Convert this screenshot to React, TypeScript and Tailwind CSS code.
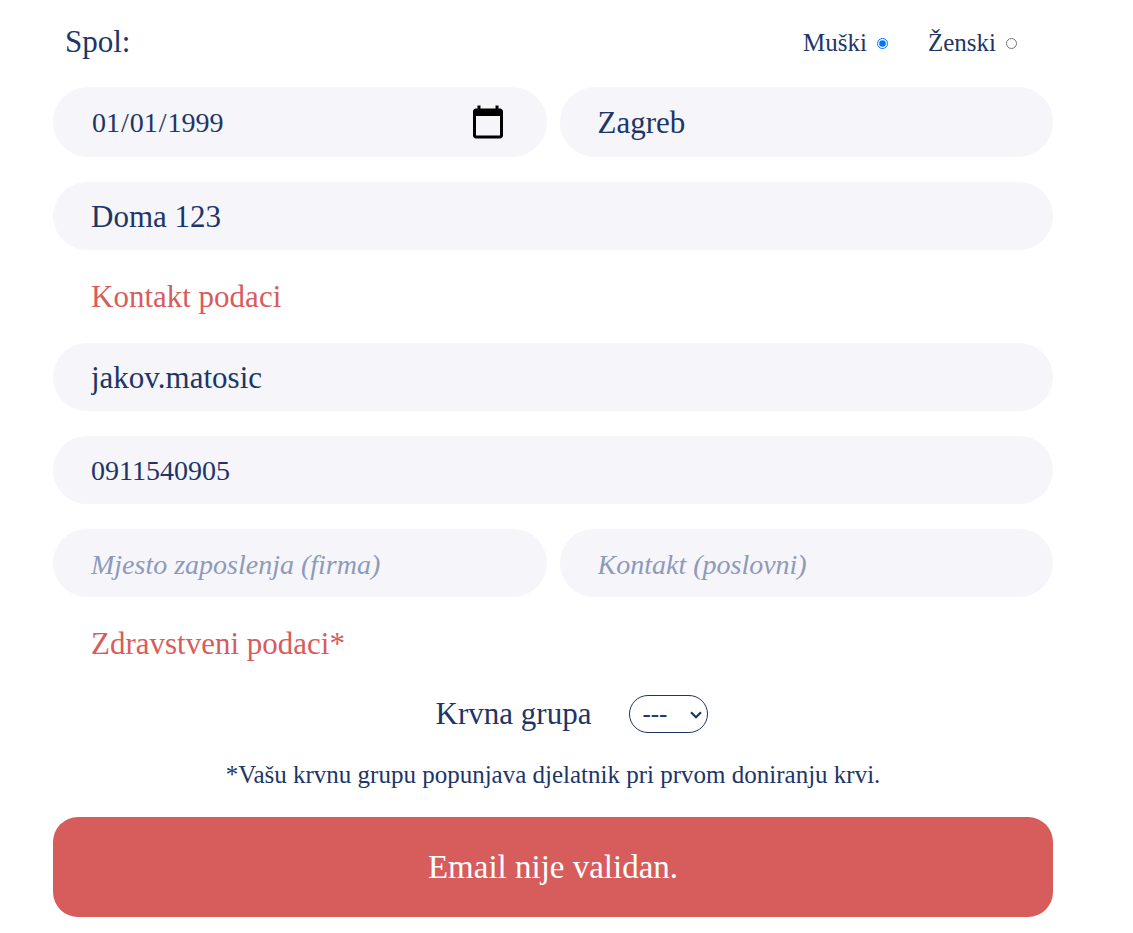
import type { InputHTMLAttributes } from "react";

type FieldProps = InputHTMLAttributes<HTMLInputElement> & { label: string };

function Field({ label, className = "h-[68px] text-[31px]", ...props }: FieldProps) {
  return (
    <input
      aria-label={label}
      className={`w-full min-w-0 flex-1 rounded-full bg-[#f5f5fa] px-[38px] pt-[2px] text-[#1d3567] outline-none placeholder:text-[28px] placeholder:text-[#8e9aba] placeholder:italic [&::-webkit-calendar-picker-indicator]:size-[38px] ${className}`}
      {...props}
    />
  );
}

function SectionTitle({ children }: { children: string }) {
  return (
    <h2 className="flex h-[43px] items-center px-[38px] pt-[2px] text-[31px] text-[#d75c5c]">
      {children}
    </h2>
  );
}

export default function App() {
  return (
    <main className="min-h-screen bg-white pr-20 pl-[53px] font-['Liberation_Serif',serif] text-[#1d3567]">
      <form className="flex flex-col gap-[25px] pb-4" onSubmit={(e) => e.preventDefault()}>
        <fieldset className="flex items-center justify-between pt-[22px] pr-9 pl-3">
          <span className="text-[31px] leading-10">Spol:</span>
          <div className="flex gap-10 pt-[2px] text-[25px]">
            <label className="flex items-center gap-[10px]">
              Muški
              <input type="radio" name="spol" defaultChecked className="size-[11px]" />
            </label>
            <label className="flex items-center gap-[10px]">
              Ženski
              <input type="radio" name="spol" className="size-[11px]" />
            </label>
          </div>
        </fieldset>

        <div className="flex gap-[13px]">
          <Field
            label="Datum rođenja"
            type="date"
            defaultValue="1999-01-01"
            className="h-[70px] text-[28px]"
          />
          <Field label="Mjesto" defaultValue="Zagreb" className="h-[70px] text-[31px]" />
        </div>
        <div className="flex">
          <Field label="Adresa" defaultValue="Doma 123" />
        </div>

        <SectionTitle>Kontakt podaci</SectionTitle>
        <div className="flex">
          <Field label="Email" defaultValue="jakov.matosic" />
        </div>
        <div className="flex">
          <Field label="Mobitel" defaultValue="0911540905" className="h-[68px] text-[28px]" />
        </div>
        <div className="flex gap-[13px]">
          <Field label="Mjesto zaposlenja" placeholder="Mjesto zaposlenja (firma)" />
          <Field label="Kontakt" placeholder="Kontakt (poslovni)" />
        </div>

        <SectionTitle>Zdravstveni podaci*</SectionTitle>
        <div className="flex items-center justify-center gap-[38px] pt-[2px] pl-[38px]">
          <label htmlFor="krvna" className="text-[31px] leading-[44px]">
            Krvna grupa
          </label>
          <div className="relative flex">
            <select
              id="krvna"
              className="h-[38px] w-[79px] appearance-none rounded-full border border-[#1d3567] bg-white pr-6 pl-3 text-[25px] leading-7"
            >
              <option>---</option>
              <option>0+</option>
              <option>0-</option>
              <option>A+</option>
              <option>A-</option>
              <option>B+</option>
              <option>B-</option>
              <option>AB+</option>
              <option>AB-</option>
            </select>
            <svg
              viewBox="0 0 12 8"
              className="pointer-events-none absolute top-4 right-[6px] h-2 w-3"
              fill="none"
              stroke="#1d3567"
              strokeWidth="2.2"
              aria-hidden="true"
            >
              <path d="M1 1.2 6 6.2 11 1.2" />
            </svg>
          </div>
        </div>
        <p className="pb-[3px] text-center text-[25px] leading-7">
          *Vašu krvnu grupu popunjava djelatnik pri prvom doniranju krvi.
        </p>
        <button
          type="submit"
          className="h-[100px] rounded-[25px] bg-[#d75c5c] pt-[2px] text-[33px] font-medium text-white"
        >
          Email nije validan.
        </button>
      </form>
    </main>
  );
}
